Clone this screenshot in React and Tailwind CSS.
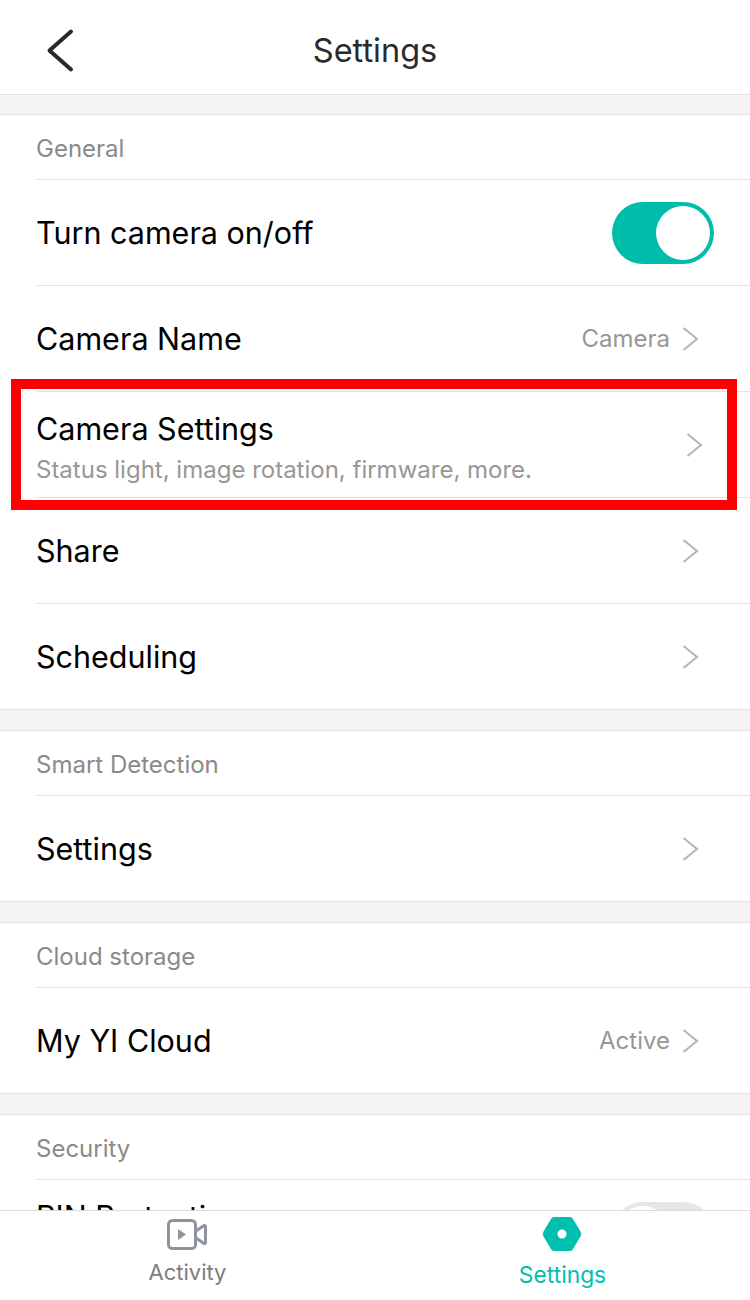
import React from 'react';

const Chevron = ({ className = '' }) => (
  <svg width="20" height="28" viewBox="0 0 20 28" fill="none" className={className}>
    <path d="M3.5 3 L17 14 L3.5 25" stroke="#b4b4b4" strokeWidth="2" />
  </svg>
);

const Toggle = ({ on }) => (
  <div className={`w-[102px] h-[62px] rounded-full p-[4px] flex shrink-0 ${on ? 'bg-[#00bcaa] justify-end' : 'bg-[#e6e6e8] justify-start'}`}>
    <div className="w-[54px] h-[54px] rounded-full bg-white" />
  </div>
);

const SectionHead = ({ children }) => (
  <div className="h-[65px] ml-[36px] pt-[3px] border-b border-[#e3e3e3] flex items-center text-[24px] text-[#8a8a8a]">
    {children}
  </div>
);

const Row = ({ title, sub, value, last, toggle, chevronClass = 'mr-[14px]' }) => (
  <div className={`ml-[36px] flex items-center pr-[36px] ${last ? 'h-[105px]' : 'h-[106px] border-b border-[#e3e3e3]'}`}>
    <div className={`flex-1 min-w-0 ${sub ? 'pt-[6px]' : ''}`}>
      <div className="text-[30.5px] leading-[36px] text-black">{title}</div>
      {sub && <div className="text-[24px] leading-[30px] mt-[8px] text-[#979797]">{sub}</div>}
    </div>
    {value && <span className="text-[24px] text-[#979797] mr-[10px]">{value}</span>}
    {toggle ? <Toggle on /> : <Chevron className={chevronClass} />}
  </div>
);

const Gap = ({ first }) => (
  <div className={`bg-[#f4f4f4] border-y border-[#e3e3e3] ${first ? 'h-[21px]' : 'h-[22px]'}`} />
);

export default function App() {
  return (
    <div className="relative w-[750px] h-[1300px] bg-white overflow-hidden flex flex-col font-['Inter','Noto_Sans',sans-serif]">
      <header className="h-[94px] shrink-0 relative flex items-center justify-center pt-[9px]">
        <svg width="30" height="46" viewBox="0 0 30 46" fill="none" className="absolute left-[45px] top-[28px]">
          <path d="M26 3.5 L4.5 22.5 L26 41.5" stroke="#2a2a2a" strokeWidth="4" strokeLinecap="round" strokeLinejoin="round" />
        </svg>
        <h1 className="text-[32.5px] font-normal text-[#2a2a2a]">Settings</h1>
      </header>

      <main className="flex-1 min-h-0 overflow-hidden">
        <Gap first />
        <SectionHead>General</SectionHead>
        <Row title="Turn camera on/off" toggle />
        <Row title="Camera Name" value="Camera" />
        <Row title="Camera Settings" sub="Status light, image rotation, firmware, more." chevronClass="mr-[10px]" />
        <Row title="Share" />
        <Row title="Scheduling" last />
        <Gap />
        <SectionHead>Smart Detection</SectionHead>
        <Row title="Settings" last />
        <Gap />
        <SectionHead>Cloud storage</SectionHead>
        <Row title="My YI Cloud" value="Active" last />
        <Gap />
        <SectionHead>Security</SectionHead>
        <div className="h-[106px] ml-[36px] flex items-center justify-between pr-[36px]">
          <div className="self-start pt-[19px] text-[30.5px] leading-[36px] text-black">PIN Protection</div>
          <Toggle />
        </div>
      </main>

      <nav className="h-[90px] shrink-0 bg-white border-t border-[#dcdcdc] flex">
        <div className="w-1/2 flex flex-col items-center pt-[8px]">
          <svg width="40" height="32" viewBox="0 0 40 32" fill="none" className="-ml-[2px]">
            <rect x="1.5" y="1.5" width="27" height="28" rx="4" stroke="#8f93a0" strokeWidth="3" />
            <path d="M11 10 L19 15.5 L11 21 Z" fill="#8f93a0" />
            <path d="M29 12 L37 6.5 Q38.5 6 38.5 8 V23 Q38.5 25 37 24.5 L29 19" stroke="#8f93a0" strokeWidth="3" strokeLinejoin="round" />
          </svg>
          <span className="text-[22px] leading-[26px] mt-[8px] text-[#7d7d7d]">Activity</span>
        </div>
        <div className="w-1/2 flex flex-col items-center pt-[5px]">
          <svg width="40" height="36" viewBox="0 0 40 36" fill="none" className="-ml-[2px]">
            <path fillRule="evenodd" d="M12 1 H28 Q30 1 31 3 L38.5 15.5 Q40 18 38.5 20.5 L31 33 Q30 35 28 35 H12 Q10 35 9 33 L1.5 20.5 Q0 18 1.5 15.5 L9 3 Q10 1 12 1 Z M20 13.5 A4.5 4.5 0 1 0 20 22.5 A4.5 4.5 0 1 0 20 13.5 Z" fill="#00bfae" />
          </svg>
          <span className="text-[22.8px] leading-[26px] mt-[10px] text-[#00bfae]">Settings</span>
        </div>
      </nav>

      <div className="absolute left-[11px] top-[379px] w-[726px] h-[131px] border-[10px] border-[#ff0000] pointer-events-none" />
    </div>
  );
}
